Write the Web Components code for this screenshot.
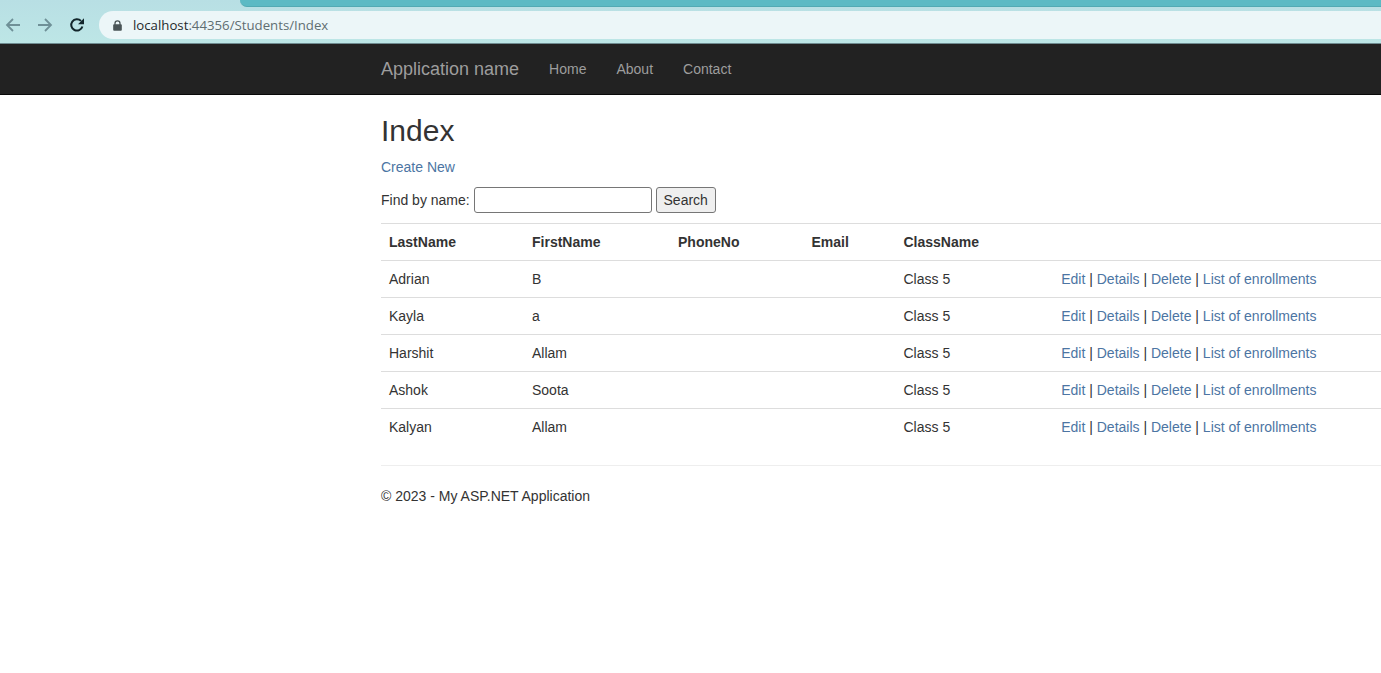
<!DOCTYPE html>
<html lang="en"><head><meta charset="utf-8"><title>Index</title>
<style>
html,body{margin:0;padding:0;height:673px;overflow:hidden;background:#fff}
body{font:14px/20px "Liberation Sans",Arial,sans-serif;color:#333}
</style></head><body>
<browser-bar url-host="localhost" url-path=":44356/Students/Index"></browser-bar>
<site-nav brand="Application name"><a href="#">Home</a><a href="#">About</a><a href="#">Contact</a></site-nav>
<page-body>
  <h2 slot="title">Index</h2>
  <a slot="create" href="#">Create New</a>
  <search-form slot="search"></search-form>
  <students-table slot="table"></students-table>
  <span slot="footer">© 2023 - My ASP.NET Application</span>
</page-body>
<script>
function def(name, html, init){
  customElements.define(name, class extends HTMLElement{
    constructor(){super();this.attachShadow({mode:'open'}).innerHTML=typeof html==='function'?html(this):html;}
    connectedCallback(){init&&init(this);}
  });
}
def('browser-bar',`<style>
:host{display:block;height:44px;background:linear-gradient(#b8dfe4,#bde6e6);position:relative;box-sizing:border-box;border-bottom:1px solid #6f8c91}
.tab{position:absolute;left:240px;right:0;top:0;height:6px;background:#5cbac4;border-bottom-left-radius:8px;border-bottom:1px solid #52aab3}
.row{display:flex;align-items:center;height:28px;padding-top:11px}
.ic{width:32px;display:flex;justify-content:center;flex:none}
.nav{display:flex;margin-right:6px;margin-left:-3px}
.url{flex:1;height:28px;background:#ecf6f8;border-radius:14px 0 0 14px;display:flex;align-items:center;padding-left:14px;font:13.23px "Open Sans",sans-serif;color:#5f6e72}
.url b{font-weight:400;color:#1f2a2c}
.lock{margin-right:11px;display:block}
</style>
<div class="tab"></div>
<div class="row"><div class="nav">
<div class="ic"><svg width="16" height="16" viewBox="0 0 16 16" fill="none" stroke="#6f9097" stroke-width="1.8"><path d="M15 8H2M8 2 2 8l6 6"/></svg></div>
<div class="ic"><svg width="16" height="16" viewBox="0 0 16 16" fill="none" stroke="#6f9097" stroke-width="1.8"><path d="M1 8h13M8 2l6 6-6 6"/></svg></div>
<div class="ic"><svg width="16" height="16" viewBox="0 0 16 16" fill="none" stroke="#13262b" stroke-width="2"><path d="M13.4 9.5A5.7 5.7 0 1 1 12 3.900"/><path fill="#13262b" stroke="none" d="M15 1.200v6h-6z"/></svg></div>
</div>
<div class="url"><svg class="lock" width="9" height="11" viewBox="0 0 10 12"><path fill="#4a5557" d="M1.500 4.500V3.700a3.500 3.500 0 0 1 7 0v.8h.3c.6 0 1 .4 1 1v5.300c0 .6-.4 1-1 1H1.200c-.6 0-1-.4-1-1V5.500c0-.6.4-1 1-1zm1.400 0h4.200V3.700a2.100 2.100 0 0 0-4.200 0z"/></svg><span id="t"></span></div></div>`,
el=>{const t=el.shadowRoot.getElementById('t');t.innerHTML='<b></b><span></span>';t.firstChild.textContent=el.getAttribute('url-host');t.lastChild.textContent=el.getAttribute('url-path');});
def('site-nav',el=>`<style>
:host{display:block;height:51px;box-sizing:border-box;background:#222;border-bottom:1px solid #080808;padding-left:381px}
.in{display:flex;height:50px;align-items:center}
.brand{font-size:18px;color:#9d9d9d;margin-right:30px}
nav{display:flex;gap:30px}
::slotted(a){color:#9d9d9d;text-decoration:none;font-size:14px}
</style><div class="in"><span class="brand">${el.getAttribute('brand')}</span><nav><slot></slot></nav></div>`);
def('page-body',`<style>
:host{display:block;padding-left:381px;width:1000px}
::slotted(h2){font:500 30px/33px "Liberation Sans",Arial,sans-serif;color:#333;margin:19px 0 10px}
::slotted(a){color:#4c75a3;text-decoration:none;display:block;margin-bottom:10px}
.f{border-top:1px solid #eee;margin-top:20px;padding-top:20px}
</style><slot name="title"></slot><slot name="create"></slot><slot name="search"></slot><slot name="table"></slot>
<div class="f"><slot name="footer"></slot></div>`);
def('search-form',`<style>
:host{display:flex;align-items:center;height:26px;margin-bottom:10px;color:#333}
input{box-sizing:border-box;width:178px;height:26px;margin:0 4px 0 4px;border:1px solid #767676;border-radius:3px;background:#fff;padding:1px 2px}
button{box-sizing:border-box;width:60px;height:26px;border:1px solid #767676;border-radius:3px;background:#efefef;color:#333;font:14px "Liberation Sans",Arial,sans-serif;padding:0}
</style><span>Find by name:</span><input type="text" aria-label="Find by name"><button type="button">Search</button>`);
const rows=[['Adrian','B'],['Kayla','a'],['Harshit','Allam'],['Ashok','Soota'],['Kalyan','Allam']];
def('students-table',`<style>
:host{display:block}
table{width:1000px;table-layout:fixed;border-collapse:collapse;font-size:14px;line-height:20px}
th,td{padding:8px;border-top:1px solid #ddd;text-align:left;height:20px;color:#333}
th{font-weight:700;border-bottom:1px solid #ddd}
tbody tr:first-child td{border-top:0}
a{color:#4c75a3;text-decoration:none}
</style><table><colgroup><col style="width:143px"><col style="width:146px"><col style="width:133.500px"><col style="width:92px"><col style="width:157.700px"><col></colgroup>
<thead><tr><th>LastName</th><th>FirstName</th><th>PhoneNo</th><th>Email</th><th>ClassName</th><th></th></tr></thead><tbody>${rows.map(r=>`<tr><td>${r[0]}</td><td>${r[1]}</td><td></td><td></td><td>Class 5</td><td><a href="#">Edit</a> | <a href="#">Details</a> | <a href="#">Delete</a> | <a href="#">List of enrollments</a></td></tr>`).join('')}</tbody></table>`);
</script>
</body></html>
